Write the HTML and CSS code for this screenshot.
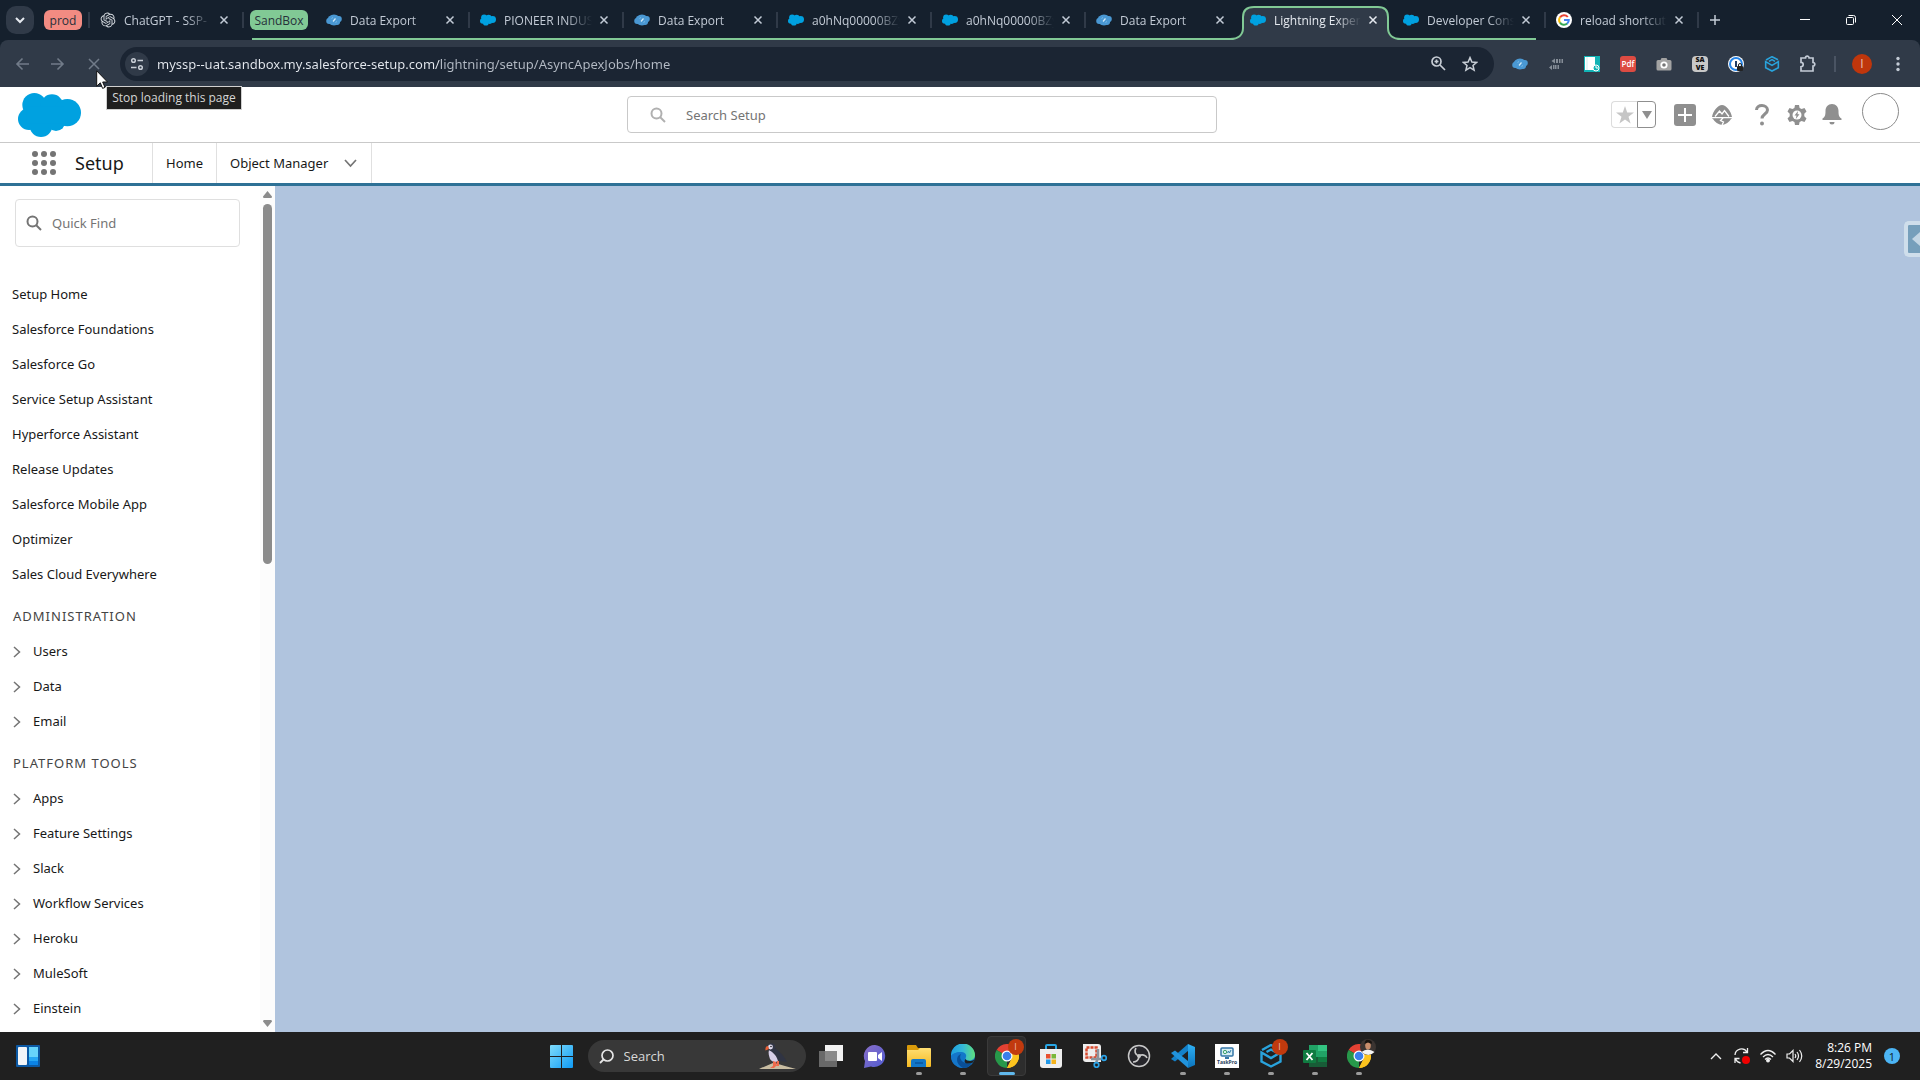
FILE: index.html
```html
<!DOCTYPE html>
<html lang="en">
<head>
<meta charset="utf-8">
<title>Lightning Experience</title>
<link rel="stylesheet" href="styles.css">
</head>
<body>
<svg class="sprite" aria-hidden="true">
  <defs>
    <linearGradient id="g-win" x1="0" y1="0" x2="1" y2="1"><stop offset="0" stop-color="#7fdcfb"/><stop offset="1" stop-color="#0f9bf5"/></linearGradient>
    <linearGradient id="g-chat" x1="0" y1="0" x2="1" y2="1"><stop offset="0" stop-color="#8a6fc9"/><stop offset="1" stop-color="#4f5bd0"/></linearGradient>
    <linearGradient id="g-edge" x1="0" y1="0" x2="1" y2="0"><stop offset="0" stop-color="#1c9fe0"/><stop offset=".5" stop-color="#35b8d8"/><stop offset="1" stop-color="#5fe07c"/></linearGradient>
    <linearGradient id="g-code" x1="0" y1="0" x2="0" y2="1"><stop offset="0" stop-color="#2fb1f5"/><stop offset="1" stop-color="#0b74bd"/></linearGradient>
    <linearGradient id="g-folder" x1="0" y1="0" x2="0" y2="1"><stop offset="0" stop-color="#ffdf73"/><stop offset="1" stop-color="#f5b921"/></linearGradient>
  </defs>
  <symbol id="cloud" viewBox="54 279 189 132"><circle cx="103" cy="315" r="36"/><circle cx="156" cy="317" r="34"/><circle cx="202" cy="338" r="41"/><circle cx="87" cy="357" r="33"/><circle cx="123" cy="377" r="34"/><circle cx="168" cy="365" r="28"/><path d="M80 320h110v50H80z"/></symbol>
  <symbol id="inspector" viewBox="0 0 16 12"><ellipse cx="8" cy="6" rx="6.600" ry="5.400"/><circle cx="3.200" cy="7" r="3"/><circle cx="12.800" cy="5" r="3"/><circle cx="11" cy="8" r="3"/><path d="M7 7.500 9.500 4.500" stroke="#d5ebf8" stroke-width="1.200"/><path d="M5.500 4.500 7 3.500M9.500 8.500l1.500-1" stroke="#7dbbe6"/></symbol>
  <symbol id="x" viewBox="0 0 10 10"><path d="M1.500 1.500l7 7M8.500 1.500l-7 7" fill="none" stroke="currentColor" stroke-width="1.500"/></symbol>
  <symbol id="lens" viewBox="0 0 16 16"><circle cx="6.500" cy="6.500" r="5" fill="none" stroke="currentColor" stroke-width="2"/><path d="M10 10l5 5" stroke="currentColor" stroke-width="2"/></symbol>
  <symbol id="right" viewBox="0 0 8 12"><path d="M1 1l5.500 5L1 11" fill="none" stroke="currentColor" stroke-width="1.500"/></symbol>
  <symbol id="cubebox" viewBox="0 0 24 24"><path d="M2.500 8.500 12 14l9.500-5.500v9L12 22.500l-9.500-5zM3 6l9-5 9 4.500M7.500 8 12 5.500l4.500 2.500" fill="none" stroke="currentColor" stroke-width="2.400"/></symbol>
  <symbol id="chrome" viewBox="0 0 24 24"><path d="M12 12 1.600 6A12 12 0 0 1 22.400 6z" fill="#e34133"/><path d="M12 12 1.600 6A12 12 0 0 0 12 24z" fill="#27984a"/><path d="M12 12H22.400V6A12 12 0 0 1 12 24L17 14z" fill="#fcc31e"/><path d="M12 6.500H22.600L23 9 17 14z" fill="#e34133"/><path d="M16.800 9.200H23.600A12 12 0 0 1 12 24L16.800 14.600z" fill="#fcc31e"/><circle cx="12" cy="12" r="5.500" fill="#fff"/><circle cx="12" cy="12" r="4.300" fill="#3b7fec"/></symbol>
</svg>

<header class="browser">
  <div class="tabstrip">
    <button class="tab-search" aria-label="Search tabs"><svg width="10" height="7" viewBox="0 0 10 7"><path d="M1 1l4 4 4-4" fill="none" stroke="currentColor" stroke-width="2"/></svg></button>
    <button class="chip chip-prod">prod</button>
    <div class="tab first"><svg class="fav openai" viewBox="-1 -1 26 26"><path d="M22.2819 9.8211a5.9847 5.9847 0 0 0-.5157-4.9108 6.0462 6.0462 0 0 0-6.5098-2.9A6.0651 6.0651 0 0 0 4.9807 4.1818a5.9847 5.9847 0 0 0-3.9977 2.9 6.0462 6.0462 0 0 0 .7427 7.0966 5.98 5.98 0 0 0 .511 4.9107 6.051 6.051 0 0 0 6.5146 2.9001A5.9847 5.9847 0 0 0 13.2599 24a6.0557 6.0557 0 0 0 5.7718-4.2058 5.9894 5.9894 0 0 0 3.9977-2.9001 6.0557 6.0557 0 0 0-.7475-7.0729zm-9.022 12.6081a4.4755 4.4755 0 0 1-2.8764-1.0408l.1419-.0804 4.7783-2.7582a.7948.7948 0 0 0 .3927-.6813v-6.7369l2.02 1.1686a.071.071 0 0 1 .038.052v5.5826a4.504 4.504 0 0 1-4.4945 4.4944zm-9.6607-4.1254a4.4708 4.4708 0 0 1-.5346-3.0137l.142.0852 4.783 2.7582a.7712.7712 0 0 0 .7806 0l5.8428-3.3685v2.3324a.0804.0804 0 0 1-.0332.0615L9.74 19.9502a4.4992 4.4992 0 0 1-6.1408-1.6464zM2.3408 7.8956a4.485 4.485 0 0 1 2.3655-1.9728V11.6a.7664.7664 0 0 0 .3879.6765l5.8144 3.3543-2.0201 1.1685a.0757.0757 0 0 1-.071 0l-4.8303-2.7865A4.504 4.504 0 0 1 2.3408 7.872zm16.5963 3.8558L13.1038 8.364 15.1192 7.2a.0757.0757 0 0 1 .071 0l4.8303 2.7913a4.4944 4.4944 0 0 1-.6765 8.1042v-5.6772a.79.79 0 0 0-.407-.667zm2.0107-3.0231l-.142-.0852-4.7735-2.7818a.7759.7759 0 0 0-.7854 0L9.409 9.2297V6.8974a.0662.0662 0 0 1 .0284-.0615l4.8303-2.7866a4.4992 4.4992 0 0 1 6.6802 4.66zM8.3065 12.863l-2.02-1.1638a.0804.0804 0 0 1-.038-.0567V6.0742a4.4992 4.4992 0 0 1 7.3757-3.4537l-.142.0805L8.704 5.459a.7948.7948 0 0 0-.3927.6813zm1.0976-2.3654l2.602-1.4998 2.6069 1.4998v2.9994l-2.5974 1.4997-2.6067-1.4997Z"/></svg><span class="title">ChatGPT - SSP-</span><button class="close" aria-label="Close tab"><svg><use href="#x"/></svg></button></div>
    <div class="group">
      <button class="chip chip-sandbox">SandBox</button>
      <div class="tab"><svg class="fav inspector"><use href="#inspector"/></svg><span class="title">Data Export</span><button class="close" aria-label="Close tab"><svg><use href="#x"/></svg></button></div>
      <div class="tab"><svg class="fav sf"><use href="#cloud"/></svg><span class="title">PIONEER INDUS</span><button class="close" aria-label="Close tab"><svg><use href="#x"/></svg></button></div>
      <div class="tab"><svg class="fav inspector"><use href="#inspector"/></svg><span class="title">Data Export</span><button class="close" aria-label="Close tab"><svg><use href="#x"/></svg></button></div>
      <div class="tab"><svg class="fav sf"><use href="#cloud"/></svg><span class="title">a0hNq00000BZy</span><button class="close" aria-label="Close tab"><svg><use href="#x"/></svg></button></div>
      <div class="tab"><svg class="fav sf"><use href="#cloud"/></svg><span class="title">a0hNq00000BZy</span><button class="close" aria-label="Close tab"><svg><use href="#x"/></svg></button></div>
      <div class="tab no-sep"><svg class="fav inspector"><use href="#inspector"/></svg><span class="title">Data Export</span><button class="close" aria-label="Close tab"><svg><use href="#x"/></svg></button></div>
      <div class="tab active no-sep"><svg class="outline" viewBox="0 0 173 40"><path class="shape" d="M0 40v-1C8 39 13 35 13 28V17Q13 7 24 7H148Q158 7 158 17V28C158 35 163 39 171 39h2v1z"/><path class="line" d="M0 39C8 39 13 35 13 28V17Q13 7 24 7H148Q158 7 158 17V28C158 35 163 39 171 39h2"/></svg><svg class="fav sf"><use href="#cloud"/></svg><span class="title">Lightning Exper</span><button class="close" aria-label="Close tab"><svg><use href="#x"/></svg></button></div>
      <div class="tab narrow"><svg class="fav sf"><use href="#cloud"/></svg><span class="title">Developer Cons</span><button class="close" aria-label="Close tab"><svg><use href="#x"/></svg></button></div>
    </div>
    <div class="tab narrow"><svg class="fav" viewBox="0 0 16 16"><circle cx="8" cy="8" r="8" fill="#fff"/><g fill="none" stroke-width="2"><path d="M11.800 5A4.800 4.800 0 0 0 4 5.400" stroke="#e94335"/><path d="M4 5.300a4.800 4.800 0 0 0 0 5.400" stroke="#fbbc05"/><path d="M4 10.600a4.800 4.800 0 0 0 7.200 1" stroke="#34a853"/><path d="M8 8h4.800a4.800 4.800 0 0 1-1.700 3.700" stroke="#4285f4"/></g></svg><span class="title">reload shortcut</span><button class="close" aria-label="Close tab"><svg><use href="#x"/></svg></button></div>
    <button class="new-tab" aria-label="New tab"><svg width="12" height="12" viewBox="0 0 12 12"><path d="M6 1v10M1 6h10" stroke="currentColor" stroke-width="1.500"/></svg></button>
    <div class="win-controls">
      <button aria-label="Minimize"><svg width="12" height="12" viewBox="0 0 12 12"><path d="M1 5.500h10" stroke="#fff"/></svg></button>
      <button aria-label="Restore"><svg width="12" height="12" viewBox="0 0 12 12" fill="none" stroke="#fff"><rect x="1.500" y="3.500" width="7" height="7" rx="1"/><path d="M3.500 1.500h5a2 2 0 0 1 2 2v5"/></svg></button>
      <button aria-label="Close"><svg width="12" height="12" viewBox="0 0 12 12"><path d="M1 1l10 10M11 1L1 11" stroke="#fff"/></svg></button>
    </div>
  </div>

  <div class="toolbar">
    <div class="nav-buttons">
      <button aria-label="Back"><svg width="14" height="14" viewBox="0 0 14 14"><path d="M14 7H2M7.500 1.500 2 7l5.500 5.500" fill="none" stroke="currentColor" stroke-width="1.600"/></svg></button>
      <button aria-label="Forward"><svg width="14" height="14" viewBox="0 0 14 14"><path d="M0 7h12M6.500 1.500 12 7l-5.500 5.500" fill="none" stroke="currentColor" stroke-width="1.600"/></svg></button>
      <button aria-label="Stop" class="stop"><svg width="12" height="12" viewBox="0 0 12 12"><path d="M1 1l10 10M11 1L1 11" stroke="currentColor" stroke-width="1.500"/></svg>
        <svg class="cursor" width="12" height="20" viewBox="0 0 12 20"><path d="M.7.800v15.400l3.600-3.400 2.300 5.600 2.400-1-2.300-5.400h4.800z" fill="#fff" stroke="#111"/></svg>
        <span class="tooltip" role="tooltip">Stop loading this page</span></button>
    </div>
    <div class="omnibox">
      <button class="site-info" aria-label="Site information"><svg width="14" height="14" viewBox="0 0 14 14" fill="none" stroke="currentColor" stroke-width="1.500"><circle cx="3.500" cy="3.500" r="1.800"/><path d="M7.500 3.500H13M1 10.500h5.500"/><circle cx="10.500" cy="10.500" r="1.800"/></svg></button>
      <input class="url" aria-label="Address" value="myssp--uat.sandbox.my.salesforce-setup.com/lightning/setup/AsyncApexJobs/home">
      <button class="omni-btn" aria-label="Zoom"><svg width="15" height="15" viewBox="0 0 15 15" fill="none" stroke="currentColor" stroke-width="1.700"><circle cx="5.500" cy="5.500" r="4.500"/><path d="M9 9l5 5M5.500 3.500v4M3.500 5.500h4"/></svg></button>
      <button class="omni-btn" aria-label="Bookmark"><svg width="16" height="16" viewBox="0 0 16 16"><path d="M8 1.600l1.900 4.400 4.700.4-3.600 3.100 1.100 4.700L8 11.700l-4.100 2.500L5 9.500 1.400 6.400l4.700-.4z" fill="none" stroke="currentColor" stroke-width="1.500"/></svg></button>
    </div>
    <div class="extensions">
      <button aria-label="Salesforce Inspector"><svg class="inspector" width="16" height="12"><use href="#inspector"/></svg></button>
      <button aria-label="Extension"><svg width="14" height="14" viewBox="0 0 14 14" fill="#858d97"><path d="M2.500 4 6 1.500v5zM7 2h2v4H7zM10 2h1.500v4H10zM12.500 2H14v4h-1.500zM0 10.500 3 8v5zM4 8h1.500v4H4zM6 8h1.500v4H6zM8.500 8H10v4H8.500z"/></svg></button>
      <button aria-label="Page history"><svg width="16" height="16" viewBox="0 0 16 16"><rect width="16" height="16" fill="#12b3b5"/><path d="M1 1h10v8l-2 5H1z" fill="#fff"/><path d="M3 1v13" stroke="#d0efef"/><circle cx="12" cy="12" r="3" fill="#12b3b5" stroke="#fff"/><path d="M12 10v2h2" stroke="#fff" fill="none"/></svg></button>
      <button aria-label="PDF"><span class="pdf">Pdf</span></button>
      <button aria-label="Screenshot"><svg width="16" height="16" viewBox="0 0 16 16" fill="#a3a3a3"><path d="M4.500 4 5.500 2h5l1 2H14q1.500 0 1.500 1.500V13q0 1.500-1.500 1.500H2Q.5 14.500.5 13V5.500Q.5 4 2 4z"/><circle cx="8" cy="9" r="2.700" fill="#777" stroke="#fff" stroke-width="1.800"/></svg></button>
      <button aria-label="Save"><span class="save">SA<br>VE</span></button>
      <button aria-label="Password manager"><svg width="16" height="16" viewBox="0 0 16 16"><circle cx="8" cy="8" r="8" fill="#fff"/><circle cx="8" cy="8" r="6" fill="#fff" stroke="#2584e8" stroke-width="2"/><path d="M8 5v6" stroke="#203c66" stroke-width="2"/><rect x="9" y="10" width="6" height="5" rx="1" fill="#222"/><path d="M10.500 10V9a1.500 1.500 0 0 1 3 0v1" fill="none" stroke="#222"/></svg></button>
      <button aria-label="Box" class="cube"><svg width="16" height="16"><use href="#cubebox"/></svg></button>
      <button aria-label="Extensions"><svg width="18" height="18" viewBox="0 0 18 18"><path d="M2 3h4.500a1.800 1.800 0 0 1 3.600 0H14v4.500a1.800 1.800 0 0 1 0 3.600V16H2v-4.200a2.200 2.200 0 0 0 0-4.400z" fill="none" stroke="#c3cbd6" stroke-width="1.700"/></svg></button>
      <span class="divider"></span>
      <button class="profile" aria-label="Profile">I</button>
      <button class="menu" aria-label="Menu"><svg width="4" height="16" viewBox="0 0 4 16" fill="#c3cbd6"><circle cx="2" cy="2.500" r="1.700"/><circle cx="2" cy="8" r="1.700"/><circle cx="2" cy="13.500" r="1.700"/></svg></button>
    </div>
  </div>
</header>

<div class="sf-header">
  <a href="#" class="logo" aria-label="Salesforce"><svg class="sf" width="63" height="44"><use href="#cloud"/></svg></a>
  <label class="search"><svg width="16" height="16"><use href="#lens"/></svg><input type="search" placeholder="Search Setup" aria-label="Search Setup"></label>
  <div class="actions">
    <div class="favorites"><button aria-label="Favorite"><svg width="18" height="18" viewBox="0 0 18 18"><path d="M9 0l2.200 6.600H18l-5.500 4.100 2.100 6.900L9 13.500l-5.600 4.100 2.100-6.900L0 6.600h6.800z" fill="#c6c6c6"/></svg></button><button aria-label="Favorites list"><svg width="10" height="8" viewBox="0 0 10 8"><path d="M0 0h10L5 8z" fill="#8f8f8f"/></svg></button></div>
    <button class="w22" aria-label="Add"><svg width="22" height="22" viewBox="0 0 22 22"><rect width="22" height="22" rx="3" fill="#8f8f8f"/><path d="M11 4v14M4 11h14" stroke="#fff" stroke-width="2"/></svg></button>
    <button class="trail" aria-label="Guidance Center"><svg width="22" height="20" viewBox="0 0 22 20"><path d="M1 12C2 6 7 0 11 0s9 6 10 12q.5 1.500-1 2-3 5-9 6-6-1-9-6-1.500-.5-1-2z" fill="#8f8f8f"/><path d="M4 11.500 8.500 6l2.500 3 2.500-3.500 4.500 6M0 12.700h22M12 13l-2.500 2.500 3 1.500-1.500 3" fill="none" stroke="#fff" stroke-width="1.300"/></svg></button>
    <button class="help" aria-label="Help"><svg width="14" height="22" viewBox="0 0 14 22"><path d="M1.500 6C1.500 3 4 1.500 7 1.500s5.500 2 5.500 4.500c0 4-5.500 4-5.500 8.500" fill="none" stroke="#8f8f8f" stroke-width="3"/><circle cx="7" cy="19.500" r="2" fill="#8f8f8f"/></svg></button>
    <button class="gear" aria-label="Setup"><svg width="20" height="20" viewBox="0 0 20 20"><path d="M8 0h4l.6 3 2 1.100L17.500 3l2 3.500-2.200 2.200v2.600l2.200 2.200-2 3.500-2.900-1-2 1.100L12 20H8l-.6-2.900-2-1.100-2.900 1-2-3.500 2.200-2.200V8.700L.5 6.500l2-3.500 2.900 1.100 2-1.100z" fill="#8f8f8f"/><circle cx="10" cy="10" r="4.500" fill="#fff"/><path d="M11 6 7.500 10.500h2L8.800 14l3.700-4.800h-2z" fill="#8f8f8f"/></svg></button>
    <button class="bell" aria-label="Notifications"><svg width="20" height="21" viewBox="0 0 20 21" fill="#8f8f8f"><path d="M10 0c4 0 6.500 3 6.500 7 0 5 .8 6 3 7.500V16H.5v-1.500C2.700 13 3.500 12 3.500 7c0-4 2.500-7 6.500-7zM7.500 18h5a2.500 2.500 0 0 1-5 0z"/></svg></button>
    <button class="avatar" aria-label="View profile"></button>
  </div>
</div>

<nav class="sf-nav">
  <button class="waffle" aria-label="App Launcher"><svg width="24" height="24" viewBox="0 0 24 24" fill="#747474"><circle cx="3" cy="3" r="3"/><circle cx="12" cy="3" r="3"/><circle cx="21" cy="3" r="3"/><circle cx="3" cy="12" r="3"/><circle cx="12" cy="12" r="3"/><circle cx="21" cy="12" r="3"/><circle cx="3" cy="21" r="3"/><circle cx="12" cy="21" r="3"/><circle cx="21" cy="21" r="3"/></svg></button>
  <span class="app-name">Setup</span>
  <a href="#" class="nav-item">Home</a>
  <a href="#" class="nav-item manager">Object Manager <svg width="13" height="9" viewBox="0 0 13 9"><path d="M1 1l5.500 6L12 1" fill="none" stroke="#747474" stroke-width="1.700"/></svg></a>
</nav>

<main class="workspace">
  <aside class="sidebar">
    <div class="tree">
      <label class="quick-find"><svg width="16" height="16"><use href="#lens"/></svg><input type="search" placeholder="Quick Find" aria-label="Quick Find"></label>
      <ul class="links">
        <li><a href="#">Setup Home</a></li>
        <li><a href="#">Salesforce Foundations</a></li>
        <li><a href="#">Salesforce Go</a></li>
        <li><a href="#">Service Setup Assistant</a></li>
        <li><a href="#">Hyperforce Assistant</a></li>
        <li><a href="#">Release Updates</a></li>
        <li><a href="#">Salesforce Mobile App</a></li>
        <li><a href="#">Optimizer</a></li>
        <li><a href="#">Sales Cloud Everywhere</a></li>
      </ul>
      <h2>ADMINISTRATION</h2>
      <ul class="branches">
        <li><a href="#"><svg><use href="#right"/></svg>Users</a></li>
        <li><a href="#"><svg><use href="#right"/></svg>Data</a></li>
        <li><a href="#"><svg><use href="#right"/></svg>Email</a></li>
      </ul>
      <h2>PLATFORM TOOLS</h2>
      <ul class="branches">
        <li><a href="#"><svg><use href="#right"/></svg>Apps</a></li>
        <li><a href="#"><svg><use href="#right"/></svg>Feature Settings</a></li>
        <li><a href="#"><svg><use href="#right"/></svg>Slack</a></li>
        <li><a href="#"><svg><use href="#right"/></svg>Workflow Services</a></li>
        <li><a href="#"><svg><use href="#right"/></svg>Heroku</a></li>
        <li><a href="#"><svg><use href="#right"/></svg>MuleSoft</a></li>
        <li><a href="#"><svg><use href="#right"/></svg>Einstein</a></li>
      </ul>
    </div>
    <div class="scrollbar" aria-hidden="true"><svg width="9" height="7" viewBox="0 0 9 7"><path d="M4.500 0 9 5.500Q9 7 8 7H1Q0 7 0 5.500z" fill="#8b8b8b"/></svg><div class="track"><div class="thumb"></div></div><svg width="9" height="7" viewBox="0 0 9 7"><path d="M4.500 7 9 1.500Q9 0 8 0H1Q0 0 0 1.500z" fill="#8b8b8b"/></svg></div>
  </aside>
  <section class="canvas"><button class="drawer" aria-label="Open panel"><svg width="8" height="14" viewBox="0 0 8 14"><path d="M8 0v14L0 7z" fill="#c3d6e4"/></svg></button></section>
</main>

<footer class="taskbar">
  <button class="widgets" aria-label="Widgets"><svg width="24" height="22" viewBox="0 0 24 22"><rect width="24" height="22" rx="1" fill="#0c59a4"/><rect x="2" y="2" width="9" height="18" rx="1" fill="#f3f5f8"/><path d="M13 2h9v10h-9z" fill="#67d4fb"/><path d="M13 12h9v4h-9z" fill="#26a7f4"/><path d="M13 16h9v4h-9z" fill="#0b83e6"/></svg></button>
  <div class="apps">
    <button aria-label="Start"><svg width="23" height="23" viewBox="0 0 23 23" fill="url(#g-win)"><path d="M0 1q0-1 1-1h10v11H0zM12 0h10q1 0 1 1v10H12zM0 12h11v11H1q-1 0-1-1zM12 12h11v10q0 1-1 1H12z"/></svg></button>
    <label class="task-search"><svg width="15" height="15" viewBox="0 0 15 15"><circle cx="8.500" cy="6.500" r="5.500" fill="none" stroke="#e6e6e6" stroke-width="1.700"/><path d="M4.500 10.500 1 14" stroke="#e6e6e6" stroke-width="1.800"/></svg><input type="search" placeholder="Search" aria-label="Search Windows">
      <svg width="37" height="26" viewBox="0 0 37 26"><path d="M0 26q7-3 14-6 6 1 12 3l11 3z" fill="#c9bda2"/><path d="M10 9c0-2 1-4 3-5l3 1c5 4 9 8 12 14l-8-1z" fill="#303443"/><path d="M10 7c3 2 7 4 9 11-3 2-6 1-8-2-1-3-2-6-1-9z" fill="#d7cfe8"/><circle cx="12.500" cy="4" r="3.700" fill="#333746"/><circle cx="11.500" cy="4" r="2.400" fill="#e3dff0"/><path d="M9 3C7 3 6 5 6.500 7.500L10 6z" fill="#e85e35"/><circle cx="12" cy="3.500" r=".8" fill="#222"/><path d="M14 18v5l-3 2h4l2-2v-4M18 18l-1 5h3v-5" fill="#ef6a4c"/></svg></label>
    <button aria-label="Task View"><svg width="24" height="22" viewBox="0 0 24 22"><path d="M6 0h18v16H6z" fill="#f2f2f2"/><path d="M0 6h18v16H0z" fill="#777" opacity=".85"/></svg></button>
    <button aria-label="Chat"><svg width="23" height="23" viewBox="0 0 23 23"><path d="M12 0a11 11 0 1 1-4 21.500L1 23l1-7A11 11 0 0 1 12 0z" fill="url(#g-chat)"/><rect x="5" y="7" width="9" height="9" rx="1" fill="#fff"/><path d="M15 10l4-3v9l-4-3z" fill="#fff"/></svg></button>
    <button class="running" aria-label="File Explorer"><svg width="24" height="22" viewBox="0 0 24 22"><path d="M0 1q0-1 1-1h8l2 3h11v6H0z" fill="#d99a0a"/><path d="M0 5h11l2-2h10q1 0 1 1v17q0 1-1 1H0z" fill="url(#g-folder)"/><path d="M4 22v-6q0-2 2-2h11q2 0 2 2v6z" fill="#1277c8"/><path d="M8 18h8" stroke="#0b559c" stroke-width="1.500"/></svg></button>
    <button class="running" aria-label="Edge"><svg width="24" height="24" viewBox="0 0 24 24"><circle cx="12" cy="12" r="12" fill="#1277c9"/><path d="M0 12A12 12 0 0 1 24 11c0 4-3 5.500-6 5.500-3 0-4-1.500-3-3.500 1-3-2-5-5-5-5 0-8 2-10 4z" fill="url(#g-edge)"/><path d="M10 8c-5 1-6 14 4 16h-3C4 23 0 18 0 12c2-3 6-4 10-4z" fill="#1576c9"/><path d="M10 10c-3 5 2 11 11 9-2 3-5 5-9 5-7-3-8-12-2-14z" fill="#0a4f97"/><path d="M14.500 15c1 2 5 3 9 .5l-1.500 3c-7 2.500-10 0-7.500-3.500z" fill="#202020"/></svg></button>
    <button class="running current" aria-label="Chrome"><svg width="24" height="24"><use href="#chrome"/></svg><span class="app-badge">I</span></button>
    <button aria-label="Microsoft Store"><svg width="24" height="24" viewBox="0 0 24 24"><path d="M7 6V2q0-1 1-1h8q1 0 1 1v4" fill="none" stroke="#28a6e4" stroke-width="2"/><path d="M1 5h22v16q0 3-3 3H4q-3 0-3-3z" fill="#eee"/><path d="M7 10h4.500v4.500H7z" fill="#e8502e"/><path d="M12.500 10H17v4.500h-4.500z" fill="#7ab83a"/><path d="M7 15.500h4.500V20H7z" fill="#2198e8"/><path d="M12.500 15.500H17V20h-4.500z" fill="#f5b31c"/></svg></button>
    <button aria-label="Snipping Tool"><svg width="24" height="24" viewBox="0 0 24 24"><path d="M0 0h15q3 0 3 3v15H3q-3 0-3-3z" fill="#eee"/><rect x="3.500" y="3.500" width="10" height="10" fill="none" stroke="#d8492e" stroke-width="2.500" stroke-dasharray="3 1"/><path d="M15 5v9l-2 5M8 15h10" stroke="#8b949c" stroke-width="2.500" fill="none"/><circle cx="21" cy="14" r="2.300" fill="none" stroke="#2ba4e8" stroke-width="1.700"/><circle cx="13.500" cy="21" r="2.300" fill="none" stroke="#2ba4e8" stroke-width="1.700"/></svg></button>
    <button aria-label="OBS Studio"><svg width="24" height="24" viewBox="0 0 24 24" fill="none"><circle cx="12" cy="12" r="10.500" fill="#26262b" stroke="#c8c8c8" stroke-width="1.500"/><g stroke="#c8c8c8" stroke-width="1.700"><path d="M12 12c-4-1-5-5-3-8"/><path d="M12 12c3-2 7-1 8 2"/><path d="M12 12c0 4-3 6-6 6"/></g><circle cx="12" cy="12" r="2" fill="#c8c8c8"/></svg></button>
    <button class="running" aria-label="Visual Studio Code"><svg width="24" height="24" viewBox="0 0 24 24"><path d="M17 0l7 3v18l-7 3z" fill="url(#g-code)"/><path d="M17 0v7L4 17.500 0 15z" fill="#1481c9"/><path d="M17 24v-7L4 6.500 0 9z" fill="#2193dc"/></svg></button>
    <button class="running" aria-label="TaskPro"><svg width="24" height="24" viewBox="0 0 24 24"><path d="M0 0h24v24H0z" fill="#fff"/><rect x="6" y="4" width="12" height="8" rx="1" fill="#d7eef3" stroke="#3476a8" stroke-width="1.500"/><circle cx="10" cy="8" r="1.700" fill="none" stroke="#46a36b"/><path d="M12.500 9l1-2 1 2 1.500-3" fill="none" stroke="#2f7cab"/><path d="M10 13h4v2h-4z" fill="#3476a8"/><text x="12" y="20" text-anchor="middle" class="taskpro-label">TaskPro</text></svg></button>
    <button class="running cube" aria-label="Box"><svg width="24" height="24"><use href="#cubebox"/></svg><span class="app-badge">I</span></button>
    <button class="running" aria-label="Excel"><svg width="24" height="22" viewBox="0 0 24 22"><path d="M6 0h18v22H6z" fill="#185c37"/><path d="M6 0h9v12H6z" fill="#21a366"/><path d="M15 0h9v6h-9z" fill="#33c481"/><path d="M15 6h9v6h-9z" fill="#21a366"/><path d="M15 12h9v5h-9z" fill="#107c41"/><rect y="5" width="13" height="13" rx="1" fill="#107c41"/><path d="M3.500 8l6 7M9.500 8l-6 7" stroke="#fff" stroke-width="1.800"/></svg></button>
    <button class="running" aria-label="Chrome profile"><svg width="24" height="24"><use href="#chrome"/></svg><span class="app-photo"><svg width="16" height="16" viewBox="0 0 16 16"><circle cx="8" cy="8" r="8" fill="#3b3431"/><path d="M1.500 13q6-5 13 0-6 6-13 0z" fill="#f4f4f4"/><ellipse cx="8" cy="6.500" rx="2.800" ry="4" fill="#c98d6b"/><path d="M4.500 5Q5 0 9 1t2.500 4L8 3.500z" fill="#17130f"/></svg></span></button>
  </div>
  <div class="tray">
    <button aria-label="Hidden icons"><svg width="12" height="8" viewBox="0 0 12 8"><path d="M1 7l5-5 5 5" fill="none" stroke="#eee" stroke-width="1.400"/></svg></button>
    <button aria-label="Update"><svg width="18" height="18" viewBox="0 0 18 18" fill="none" stroke="#eee" stroke-width="1.300"><path d="M2 8a6.500 6.500 0 0 1 12-3M14.500 1v4.500H10M2 16v-4.500h4.500M2.500 12a7 7 0 0 0 5 4"/><circle cx="13" cy="13" r="4" fill="#f00000" stroke="none"/></svg></button>
    <button aria-label="Wi-Fi"><svg width="16" height="14" viewBox="0 0 16 14" fill="none" stroke="#eee" stroke-width="1.300"><path d="M.5 5.500q7.500-8 15 0M3 8q5-5 10 0M5 10.500q3-3 6 0"/><circle cx="8" cy="11.500" r="1.300" fill="#eee"/></svg></button>
    <button aria-label="Volume"><svg width="17" height="14" viewBox="0 0 17 14" fill="none" stroke="#eee" stroke-width="1.200"><path d="M1 5h2.500L7 1.500v11L3.500 9H1zM9 5q1.500 2 0 4M11 3q3 4 0 8M13.500 1q4.500 6 0 12"/></svg></button>
    <button class="clock"><span>8:26 PM</span><span>8/29/2025</span></button>
    <button class="count" aria-label="Notifications">1</button>
  </div>
</footer>
</body>
</html>
```
FILE: styles.css
```css
*, *::before, *::after { box-sizing: border-box; }

body {
  margin: 0;
  min-height: 100vh;
  display: flex;
  flex-direction: column;
  font-family: "Noto Sans", "Open Sans", sans-serif;
  font-size: 13px;
  color: #181818;
  background: #fff;
}

button {
  border: 0;
  padding: 0;
  margin: 0;
  background: none;
  color: inherit;
  font: inherit;
  display: flex;
  align-items: center;
  justify-content: center;
  flex: none;
}

input {
  border: 0;
  padding: 0;
  outline: 0;
  background: none;
  font: inherit;
  min-width: 0;
  flex: 1;
  appearance: none;
}

svg { flex: none; display: block; }
a { color: inherit; text-decoration: none; }
ul { list-style: none; margin: 0; padding: 0; }

.sprite { position: absolute; width: 0; height: 0; }
.sf { fill: #00a1e0; }
.inspector { fill: #4a98d3; }
.openai { fill: #d5dae0; }

/* Browser tabs */
.browser, .taskbar { font-family: "Open Sans", "Noto Sans", sans-serif; }
.browser { background: #15202d; }

.tabstrip {
  display: flex;
  align-items: center;
  height: 40px;
  padding-left: 6px;
  color: #c3cbd6;
  font-size: 12px;
}

.tab-search {
  width: 28px;
  height: 28px;
  border-radius: 10px;
  background: #303a48;
  color: #e6eaf0;
  margin-right: 10px;
}

.chip {
  height: 20px;
  border-radius: 6px;
  color: #26303a;
}

.chip-prod { width: 38px; background: #f28b82; margin-right: 8px; }
.chip-sandbox { width: 58px; background: #81c995; margin-right: 8px; }

.tab {
  position: relative;
  display: flex;
  align-items: center;
  width: 154px;
  height: 40px;
  padding: 0 12px 0 10px;
  flex: none;
}

.tab::after {
  content: "";
  position: absolute;
  right: 0;
  top: 12px;
  width: 2px;
  height: 16px;
  background: #303a48;
}

.tab.first { margin-right: 6px; }

.tab.first::before {
  content: "";
  position: absolute;
  left: -2px;
  top: 12px;
  width: 2px;
  height: 16px;
  background: #303a48;
}

.tab.no-sep::after { display: none; }
.tab.active, .tab.narrow { width: 153px; }
.tab > * { position: relative; }

.fav { width: 16px; height: 16px; margin-right: 8px; }

.title {
  flex: 1;
  min-width: 0;
  overflow: hidden;
  white-space: nowrap;
  margin-right: 2px;
  -webkit-mask-image: linear-gradient(90deg, #000 calc(100% - 28px), transparent calc(100% - 2px));
  mask-image: linear-gradient(90deg, #000 calc(100% - 28px), transparent calc(100% - 2px));
}

.close { width: 16px; height: 16px; }
.close svg { width: 10px; height: 10px; }

.group { position: relative; display: flex; align-items: center; }

.group::after {
  content: "";
  position: absolute;
  left: 2px;
  right: 10px;
  bottom: 0;
  height: 2px;
  background: #81c995;
}

.active { z-index: 1; color: #e6eaf0; }

.tab .outline {
  position: absolute;
  left: -10px;
  top: 0;
  width: 173px;
  height: 40px;
}

.outline .shape { fill: #303a48; }
.outline .line { fill: none; stroke: #81c995; stroke-width: 2; }

.new-tab { width: 32px; height: 32px; }
.win-controls { display: flex; margin-left: auto; }
.win-controls button { width: 46px; height: 40px; }

/* Browser toolbar */
.toolbar {
  display: flex;
  align-items: center;
  height: 47px;
  padding: 0 4px;
  background: #303a48;
  border-radius: 8px 8px 0 0;
}

.nav-buttons { display: flex; color: #717b89; margin-right: 8px; }
.nav-buttons button { width: 36px; height: 36px; position: relative; }

.cursor { position: absolute; left: 20px; top: 24px; z-index: 3; }

.tooltip {
  position: absolute;
  left: 30px;
  top: 40px;
  z-index: 2;
  width: 136px;
  height: 24px;
  line-height: 22px;
  border: 1px solid #d0d0d0;
  background: #1f1f1f;
  color: #d6d6d6;
  font-size: 12px;
  white-space: nowrap;
}

.omnibox {
  display: flex;
  align-items: center;
  flex: 1;
  height: 34px;
  padding: 0 8px 0 5px;
  border-radius: 17px;
  background: #1b2533;
  color: #c8ced6;
}

.site-info { width: 24px; height: 24px; border-radius: 12px; background: #303a48; margin-right: 8px; }

.url {
  height: 24px;
  font-family: "Noto Sans", "Open Sans", sans-serif;
  font-size: 13px;
  color: transparent;
  background: linear-gradient(90deg, #e6eaf0 284px, #b4bbc5 284px);
  -webkit-background-clip: text;
  background-clip: text;
}

.omni-btn { width: 32px; height: 32px; }

.extensions { display: flex; align-items: center; padding-left: 8px; }
.extensions button { width: 36px; height: 36px; }
.cube { color: #29a3dc; }

.pdf {
  width: 16px;
  height: 16px;
  line-height: 16px;
  border-radius: 3px;
  background: #dd4b42;
  color: #fff;
  font-size: 8px;
  font-weight: 600;
}

.save {
  width: 16px;
  height: 16px;
  border-radius: 4px;
  background: #c8c8c8;
  color: #111;
  font-size: 7px;
  font-weight: 800;
  line-height: 8px;
}

.divider { width: 2px; height: 16px; background: #4a5463; margin: 0 16px 0 8px; }
.extensions .profile { width: 20px; height: 20px; border-radius: 10px; background: #bf360c; color: #e8c5b8; font-size: 12px; }
.extensions .menu { width: 36px; margin-left: 8px; }

/* Salesforce header */
.sf-header {
  display: grid;
  grid-template-columns: minmax(0, 609fr) minmax(240px, 590fr) minmax(320px, 682fr);
  align-items: center;
  height: 56px;
  padding: 0 21px 0 18px;
  border-bottom: 1px solid #c9c9c9;
}

.logo { display: flex; }

.search, .quick-find {
  display: flex;
  align-items: center;
  border: 1px solid #c9c9c9;
  border-radius: 4px;
  font-size: 13px;
}

.search { height: 37px; padding-left: 22px; color: #b0b0b0; }
.search svg { margin-right: 20px; }
input::placeholder { color: #747474; opacity: 1; }

.actions { display: flex; align-items: center; justify-content: flex-end; }

.favorites { display: flex; margin-right: 18px; }
.favorites button { height: 27px; border: 1px solid #dcdcdc; }
.favorites button:first-child { width: 26px; border-right: 0; border-radius: 4px 0 0 4px; }
.favorites button:last-child { width: 19px; border-color: #8f8f8f; border-radius: 0 4px 4px 0; }
.actions .w22 { margin-right: 15px; }
.trail { margin-right: 22px; }
.help { margin-right: 18px; }
.gear { margin-right: 15px; }
.bell { margin-right: 20px; }
.avatar { width: 37px; height: 37px; margin-bottom: 6px; border: 1px solid #8b8b8b; border-radius: 50%; }

.sf-nav {
  display: flex;
  align-items: stretch;
  height: 43px;
  padding-left: 32px;
  border-bottom: 3px solid #2e7196;
}

.waffle { margin-right: 19px; }
.app-name { width: 77px; align-self: center; font-size: 18px; }
.nav-item { display: flex; align-items: center; padding: 0 13px; border-left: 1px solid #e0e0e0; font-size: 13px; }
.manager { border-right: 1px solid #e0e0e0; gap: 16px; padding-right: 14px; }

/* Workspace */
.workspace { display: flex; flex: 1; }

.sidebar { display: flex; width: 275px; flex: none; }
.tree { flex: 1; padding: 13px 0 6px; }

.quick-find { height: 48px; margin: 0 20px 30px 15px; padding-left: 10px; border-color: #dfdfdf; color: #747474; }
.quick-find svg { margin-right: 10px; }

.links li, .branches li { height: 35px; line-height: 35px; padding-left: 12px; }
.branches a { display: flex; align-items: center; }
.branches svg { width: 8px; height: 12px; margin: 0 12px 0 1px; color: #747474; }

.tree h2 {
  margin: 0;
  padding: 7px 0 0 13px;
  height: 42px;
  line-height: 34px;
  font-size: 13px;
  font-weight: 400;
  letter-spacing: 1px;
  color: #444;
}

.scrollbar { display: flex; flex-direction: column; align-items: center; width: 15px; padding: 5px 0; background: #fcfcfc; }
.track { flex: 1; padding: 6px 0 17px; }
.thumb { width: 9px; height: 45%; border-radius: 5px; background: #8b8b8b; }

.canvas { flex: 1; position: relative; background: #b0c4de; }

.drawer {
  position: absolute;
  right: 0;
  top: 35px;
  width: 16px;
  height: 36px;
  justify-content: flex-end;
  border: 4px solid #cfdeeb;
  border-right: 0;
  border-radius: 5px 0 0 5px;
  background: #769fbb;
}

/* Taskbar */
.taskbar {
  display: grid;
  grid-template-columns: 1fr auto 1fr;
  align-items: center;
  height: 48px;
  background: #202020;
  color: #fff;
}

.widgets { justify-self: start; margin-left: 16px; }
.apps { display: flex; align-items: center; }
.apps button { position: relative; width: 44px; height: 48px; }

.task-search {
  display: flex;
  align-items: center;
  width: 218px;
  height: 32px;
  margin: 0 3px 0 4px;
  padding: 0 10px 0 11px;
  border-radius: 16px;
  background: #383838;
  font-size: 13px;
}

.task-search input { margin-left: 10px; }
.task-search input::placeholder { color: #d8d8d8; }

.running::after {
  content: "";
  position: absolute;
  left: 19px;
  bottom: 5px;
  width: 6px;
  height: 3px;
  border-radius: 2px;
  background: #9a9a9a;
}

.current::before {
  content: "";
  position: absolute;
  inset: 4px 3px 4px 2px;
  border: 1px solid #3a3a3a;
  border-radius: 4px;
  background: #2d2d2d;
}

.current svg { position: relative; }
.running.current::after { left: 14px; width: 16px; background: #60b8ec; }

.app-badge, .app-photo {
  position: absolute;
  right: 5px;
  top: 7px;
  width: 16px;
  height: 16px;
  line-height: 16px;
  border-radius: 8px;
  font-size: 9px;
}

.app-badge { background: #c13a0e; color: #f0b9a5; }
.taskpro-label { font-size: 5px; font-weight: 700; fill: #24405a; }

.tray { display: flex; align-items: center; justify-content: flex-end; padding-right: 20px; }
.tray button { width: 26px; height: 48px; }
.tray .clock { width: auto; flex-direction: column; align-items: flex-end; margin: 0 12px 0 8px; font-size: 12px; line-height: 16px; }
.tray .count { width: 16px; height: 16px; border-radius: 8px; background: #4cb5f5; color: #10222e; font-size: 11px; }
```
